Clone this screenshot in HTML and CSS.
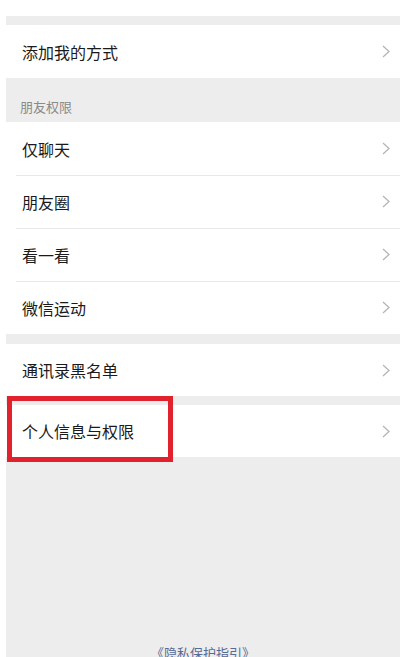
FILE: index.html
```html
<!DOCTYPE html>
<html lang="zh-CN">
<head>
<meta charset="utf-8">
<title>朋友权限</title>
<link rel="stylesheet" href="styles.css">
</head>
<body>
<div class="page">
  <div class="top-white"></div>
  <div class="main">
    <div class="gap gap-9"></div>
    <div class="group">
      <div class="row"><span class="label">添加我的方式</span><svg class="chev" viewBox="0 0 8 13"><polyline points="1,1 7,6.5 1,12"/></svg></div>
    </div>
    <div class="section-title">朋友权限</div>
    <div class="group">
      <div class="row"><span class="label">仅聊天</span><svg class="chev" viewBox="0 0 8 13"><polyline points="1,1 7,6.5 1,12"/></svg></div>
      <div class="row sep"><span class="label">朋友圈</span><svg class="chev" viewBox="0 0 8 13"><polyline points="1,1 7,6.5 1,12"/></svg></div>
      <div class="row sep"><span class="label">看一看</span><svg class="chev" viewBox="0 0 8 13"><polyline points="1,1 7,6.5 1,12"/></svg></div>
      <div class="row sep"><span class="label">微信运动</span><svg class="chev" viewBox="0 0 8 13"><polyline points="1,1 7,6.5 1,12"/></svg></div>
    </div>
    <div class="gap gap-10"></div>
    <div class="group">
      <div class="row short"><span class="label">通讯录黑名单</span><svg class="chev" viewBox="0 0 8 13"><polyline points="1,1 7,6.5 1,12"/></svg></div>
    </div>
    <div class="gap gap-9"></div>
    <div class="group">
      <div class="row short highlight"><span class="label">个人信息与权限</span><svg class="chev" viewBox="0 0 8 13"><polyline points="1,1 7,6.5 1,12"/></svg><span class="mark"></span></div>
    </div>
    <div class="footer">
      <a class="link">《隐私保护指引》</a>
    </div>
  </div>
</div>
</body>
</html>
```
FILE: styles.css
```css
html, body {
  margin: 0;
  padding: 0;
  background: #ffffff;
  height: 657px;
  overflow: hidden;
}
body {
  font-family: "Noto Sans CJK SC", "Noto Sans", sans-serif;
  color: #1a1a1a;
}
.page {
  width: 400px;
  height: 657px;
  display: flex;
  flex-direction: column;
}
.top-white {
  height: 16px;
  flex: none;
}
.main {
  margin-left: 6px;
  flex: 1;
  background: #ededed;
  display: flex;
  flex-direction: column;
}
.gap-9 { height: 9px; }
.gap-10 { height: 10px; }
.group {
  background: #ffffff;
}
.row {
  position: relative;
  height: 53px;
  display: flex;
  align-items: center;
  justify-content: space-between;
  padding: 0 10px 0 16px;
}
.row.short { height: 52px; }
.row.sep::before {
  content: "";
  position: absolute;
  top: 0;
  left: 10px;
  right: 0;
  height: 1px;
  background: #e8e8e8;
}
.label {
  font-size: 16px;
  line-height: 20px;
  color: #1a1a1a;
}
.chev {
  width: 8px;
  height: 13px;
  fill: none;
  stroke: #b5b5b5;
  stroke-width: 1.3;
}
.section-title {
  height: 44px;
  box-sizing: border-box;
  padding: 21px 0 0 14px;
  font-size: 13px;
  line-height: 16px;
  color: #8a8a8a;
}
.mark {
  position: absolute;
  left: 1px;
  top: -9px;
  width: 156px;
  height: 56px;
  border: 5px solid #e1212b;
}
.footer {
  flex: 1;
  display: flex;
  justify-content: center;
  padding-top: 188px;
}
.link {
  font-size: 13px;
  line-height: 16px;
  color: #576b95;
  height: 16px;
}
```
